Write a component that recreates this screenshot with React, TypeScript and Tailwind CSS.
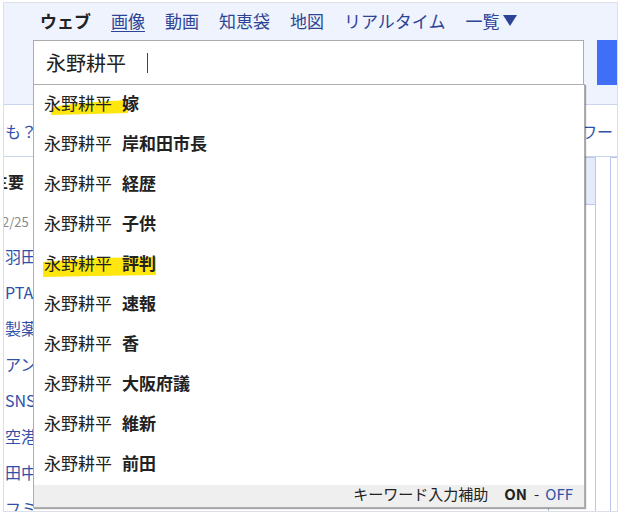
import React from 'react';

const tabs = ['画像', '動画', '知恵袋', '地図', 'リアルタイム'];

const suggestions = [
  '嫁',
  '岸和田市長',
  '経歴',
  '子供',
  '評判',
  '速報',
  '香',
  '大阪府議',
  '維新',
  '前田',
];

const sideLinks = ['羽田', 'PTA', '製薬', 'アン', 'SNS', '空港', '田中', 'フミ'];

// hand-drawn highlighter strokes, keyed by row index
function Marker({ row }: { row: number }) {
  if (row === 0) {
    return (
      <svg className="pointer-events-none absolute left-0 top-0" width="200" height="40">
        <polygon points="17,23 30,20 60,17 94,15 94,28 60,29 17,30" fill="#ffe60f" />
      </svg>
    );
  }
  if (row === 4) {
    return (
      <svg className="pointer-events-none absolute left-0 top-0" width="200" height="40">
        <polygon points="9,17 60,13 122,12 122,30 60,31 9,32" fill="#ffe60f" />
      </svg>
    );
  }
  return null;
}

export default function App() {
  return (
    <div className="w-[621px] h-[515px] bg-white overflow-hidden font-['Noto_Sans_CJK_JP','Noto_Sans',sans-serif]">
      <div className="relative ml-[3px] mt-[2px] w-[615px] h-[510px] border border-[#dcdfe6] overflow-hidden flex flex-col">
        {/* header */}
        <div className="h-[101px] shrink-0 bg-[#eef3fd] border-b border-[#cbd6ee] box-content">
          <div className="h-[34px] flex items-center gap-[20px] pl-[36px] text-[17px] leading-none text-[#2d4496] whitespace-nowrap">
            <span className="font-bold text-[#222]">ウェブ</span>
            {tabs.map((t, i) => (
              <span key={t} className={i === 0 ? 'underline underline-offset-[3px]' : ''}>
                {t}
              </span>
            ))}
            <span className="flex items-center">
              一覧
              <svg className="ml-[3px]" width="14" height="11" viewBox="0 0 14 11">
                <polygon points="0,0 14,0 7,11" fill="#2d4496" />
              </svg>
            </span>
          </div>
          <div className="mt-[3px] flex">
            <div className="ml-[29px] shrink-0 w-[551px] h-[45px] bg-white border border-[#ababab] flex items-center pl-[12px]">
              <span className="text-[20px] leading-none text-[#222]">永野耕平</span>
              <span className="ml-[21px] w-[1px] h-[20px] bg-[#444]" />
            </div>
            <div className="ml-[13px] shrink-0 w-[40px] h-[45px] bg-[#3f6ff6]" />
          </div>
        </div>

        {/* body */}
        <div className="h-[52px] shrink-0 flex items-center border-b border-[#cbd6ee] text-[16px] text-[#3050a8] whitespace-nowrap">
          <span className="w-[545px] shrink-0 pl-[1px]">も？</span>
          <span>キーワード</span>
        </div>
        <div className="flex flex-1">
          <div className="w-[544px] shrink-0 flex flex-col text-[16px] whitespace-nowrap">
            <div className="h-[48px] flex items-center -ml-[12px] font-bold text-[#222]">主要</div>
            <div className="h-[33px] flex items-center -ml-[2px] text-[13px] text-[#888]">2/25</div>
            {sideLinks.map((l) => (
              <div key={l} className="h-[36px] flex items-center pl-[1px] text-[#3050a8]">
                {l}
              </div>
            ))}
          </div>
          <div className="shrink-0 w-[48px] border border-[#b8c7ea] flex flex-col">
            <div className="h-[47px] bg-[#e4ebfa] border-b border-[#b8c7ea]" />
          </div>
          <div className="ml-[14px] shrink-0 w-[40px] border-l border-t border-[#b8c7ea]" />
        </div>

        {/* suggestion dropdown */}
        <div className="absolute left-[29px] top-[81px] w-[552px] bg-white border border-[#adadad] shadow-[1px_1px_1px_rgba(0,0,0,0.35)] flex flex-col">
          {suggestions.map((s, i) => (
            <div key={s} className="relative h-[40px] flex items-center pb-[5px] pl-[10px] text-[17px] leading-none text-[#222] whitespace-nowrap">
              <Marker row={i} />
              <span className="relative">永野耕平</span>
              <span className="relative ml-[10px] font-bold">{s}</span>
            </div>
          ))}
          <div className="h-[22px] bg-[#efefef] flex items-center justify-end pb-[5px] pr-[11px] text-[15px] leading-none text-[#222]">
            <span>キーワード入力補助</span>
            <span className="ml-[16px] font-bold">ON</span>
            <span className="ml-[7px]">-</span>
            <span className="ml-[6px] text-[#3050a8]">OFF</span>
          </div>
        </div>
      </div>
    </div>
  );
}
